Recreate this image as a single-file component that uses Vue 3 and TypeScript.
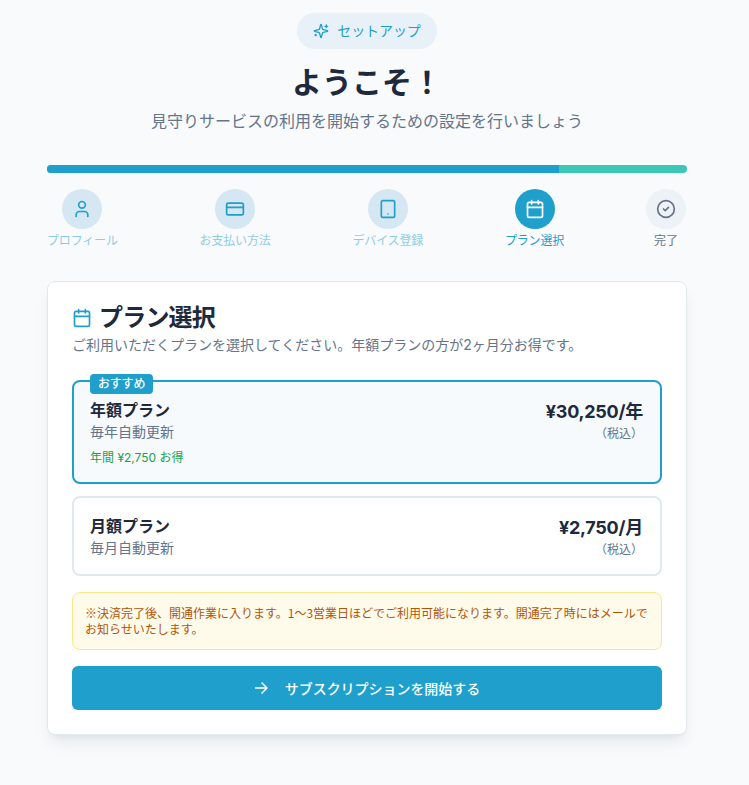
<script setup lang="ts">
interface Step {
  label: string;
  state: 'done' | 'active' | 'todo';
  icon: string;
}

interface Plan {
  name: string;
  renewal: string;
  price: string;
  saving?: string;
  recommended?: boolean;
}

const steps: Step[] = [
  { label: 'プロフィール', state: 'done', icon: 'user' },
  { label: 'お支払い方法', state: 'done', icon: 'card' },
  { label: 'デバイス登録', state: 'done', icon: 'tablet' },
  { label: 'プラン選択', state: 'active', icon: 'calendar' },
  { label: '完了', state: 'todo', icon: 'check' },
];

const plans: Plan[] = [
  { name: '年額プラン', renewal: '毎年自動更新', price: '¥30,250/年', saving: '年間 ¥2,750 お得', recommended: true },
  { name: '月額プラン', renewal: '毎月自動更新', price: '¥2,750/月' },
];
</script>

<template>
  <div class="page">
    <div class="container">
      <header class="header">
        <div class="pill">
          <svg class="pill-icon" viewBox="0 0 24 24">
            <path d="M9.937 15.5A2 2 0 0 0 8.5 14.063l-6.135-1.582a.5.5 0 0 1 0-.962L8.5 9.936A2 2 0 0 0 9.937 8.5l1.582-6.135a.5.5 0 0 1 .963 0L14.063 8.5A2 2 0 0 0 15.5 9.937l6.135 1.581a.5.5 0 0 1 0 .964L15.5 14.063a2 2 0 0 0-1.437 1.437l-1.582 6.135a.5.5 0 0 1-.963 0z" />
            <path d="M20 3v4M22 5h-4M4 17v2M5 18H3" />
          </svg>
          <span class="pill-text">セットアップ</span>
        </div>
        <h1 class="title">ようこそ！</h1>
        <p class="subtitle">見守りサービスの利用を開始するための設定を行いましょう</p>
      </header>

      <div class="progress">
        <div class="progress-fill"></div>
      </div>

      <ol class="steps">
        <li v-for="step in steps" :key="step.label" class="step" :class="step.state">
          <span class="step-circle">
            <svg class="step-icon" viewBox="0 0 24 24">
              <template v-if="step.icon === 'user'">
                <path d="M19 21v-2a4 4 0 0 0-4-4H9a4 4 0 0 0-4 4v2" />
                <circle cx="12" cy="7" r="4" />
              </template>
              <template v-else-if="step.icon === 'card'">
                <rect x="2" y="5" width="20" height="14" rx="2" />
                <path d="M2 10h20" />
              </template>
              <template v-else-if="step.icon === 'tablet'">
                <rect x="4" y="2" width="16" height="20" rx="2" />
                <path d="M12 18h.01" />
              </template>
              <template v-else-if="step.icon === 'calendar'">
                <path d="M8 2v4M16 2v4M3 10h18" />
                <rect x="3" y="4" width="18" height="18" rx="2" />
              </template>
              <template v-else>
                <circle cx="12" cy="12" r="10" />
                <path d="m9 12 2 2 4-4" />
              </template>
            </svg>
          </span>
          <span class="step-label">{{ step.label }}</span>
        </li>
      </ol>

      <section class="card">
        <div class="card-head">
          <svg class="card-icon" viewBox="0 0 24 24">
            <path d="M8 2v4M16 2v4M3 10h18" />
            <rect x="3" y="4" width="18" height="18" rx="2" />
          </svg>
          <h2 class="card-title">プラン選択</h2>
        </div>
        <p class="card-desc">ご利用いただくプランを選択してください。年額プランの方が2ヶ月分お得です。</p>

        <div class="plans">
          <div v-for="plan in plans" :key="plan.name" class="plan" :class="{ selected: plan.recommended }">
            <span v-if="plan.recommended" class="badge">おすすめ</span>
            <div class="plan-info">
              <div class="plan-name">{{ plan.name }}</div>
              <div class="plan-renewal">{{ plan.renewal }}</div>
              <div v-if="plan.saving" class="plan-saving">{{ plan.saving }}</div>
            </div>
            <div class="plan-price">
              <div class="price">{{ plan.price }}</div>
              <div class="tax">（税込）</div>
            </div>
          </div>
        </div>

        <div class="notice">
          ※決済完了後、開通作業に入ります。1〜3営業日ほどでご利用可能になります。開通完了時にはメールでお知らせいたします。
        </div>

        <button type="button" class="submit">
          <svg class="submit-icon" viewBox="0 0 16 16">
            <path d="M1.5 8H13M8 3l5 5-5 5" />
          </svg>
          <span>サブスクリプションを開始する</span>
        </button>
      </section>
    </div>
  </div>
</template>

<style scoped>
.page {
  width: 734px;
  min-height: 785px;
  box-sizing: border-box;
  padding: 13px 0 50px;
  color: #1e293b;
  font-family: Inter, 'Noto Sans CJK JP', sans-serif;
}

.container {
  width: 640px;
  margin: 0 auto;
}

svg {
  fill: none;
  stroke: currentColor;
  stroke-width: 2;
  stroke-linecap: round;
  stroke-linejoin: round;
}

.header {
  display: flex;
  flex-direction: column;
  align-items: center;
}

.pill {
  display: flex;
  align-items: center;
  gap: 8px;
  height: 36px;
  padding: 0 16px;
  border-radius: 18px;
  background: #e8f1f7;
  color: #1f9fcb;
  font-size: 14px;
}

.pill-icon {
  width: 16px;
  height: 16px;
}

.pill-text {
  margin-bottom: 2px;
  letter-spacing: -0.1px;
}

.title {
  margin: 12px 0 0;
  font-size: 30px;
  line-height: 42px;
  font-weight: 700;
}

.subtitle {
  margin: 6px 0 0;
  font-size: 16px;
  line-height: 24px;
  color: #64748b;
}

.progress {
  height: 8px;
  margin-top: 32px;
  border-radius: 4px;
  overflow: hidden;
  background: #3cc7b8;
}

.progress-fill {
  width: 80%;
  height: 100%;
  background: #1f9fcb;
}

.steps {
  display: flex;
  justify-content: space-between;
  margin: 16px 0 0;
  padding: 0;
  list-style: none;
}

.step {
  display: flex;
  flex-direction: column;
  align-items: center;
  gap: 3px;
  min-width: 40px;
  font-size: 12px;
  line-height: 18px;
}

.step:last-child {
  margin-right: 1px;
}

.step-circle {
  display: flex;
  align-items: center;
  justify-content: center;
  width: 40px;
  height: 40px;
  border-radius: 50%;
}

.step-icon {
  width: 20px;
  height: 20px;
}

.step-label {
  letter-spacing: -0.17px;
}

.done .step-circle {
  background: #d5e7f2;
  color: #1f9fcb;
}

.done .step-label {
  color: #1f9fcb;
  opacity: 0.5;
}

.active .step-circle {
  background: #1f9fcb;
  color: #fff;
}

.active .step-label {
  color: #1f9fcb;
}

.todo .step-circle {
  background: #eef1f6;
  color: #64748b;
}

.todo .step-label {
  color: #64748b;
}

.card {
  margin-top: 31px;
  padding: 24px;
  background: #fff;
  border: 1px solid #e2e8f0;
  border-radius: 8px;
  box-shadow: 0 10px 15px -3px rgba(15, 23, 42, 0.08), 0 4px 6px -4px rgba(15, 23, 42, 0.06);
}

.card-head {
  display: flex;
  align-items: center;
  gap: 7px;
}

.card-icon {
  width: 20px;
  height: 20px;
  color: #1f9fcb;
}

.card-title {
  margin: 0;
  font-size: 24px;
  line-height: 24px;
  font-weight: 700;
  letter-spacing: -0.8px;
}

.card-desc {
  margin: 5px 0 0;
  font-size: 14px;
  line-height: 20px;
  color: #64748b;
}

.plans {
  display: flex;
  flex-direction: column;
  gap: 12px;
  margin-top: 25px;
}

.plan {
  position: relative;
  display: flex;
  justify-content: space-between;
  padding: 16px;
  background: #fff;
  border: 2px solid #e2e8f0;
  border-radius: 8px;
}

.plan.selected {
  background: #f6fafd;
  border-color: #1f9fcb;
}

.badge {
  position: absolute;
  top: -8px;
  left: 16px;
  padding: 0 8px;
  border-radius: 4px;
  background: #1f9fcb;
  color: #fff;
  font-size: 12px;
  line-height: 20px;
  font-weight: 500;
  letter-spacing: -0.2px;
}

.plan-name {
  font-size: 16px;
  line-height: 24px;
  font-weight: 700;
}

.plan-renewal {
  font-size: 14px;
  line-height: 20px;
  color: #64748b;
}

.plan-saving {
  margin-top: 8px;
  font-size: 12px;
  line-height: 16px;
  color: #16a34a;
}

.plan-price {
  margin-right: 1px;
  text-align: right;
}

.price {
  font-size: 18px;
  line-height: 28px;
  font-weight: 700;
  letter-spacing: -0.25px;
}

.tax {
  font-size: 12px;
  line-height: 16px;
  color: #64748b;
}

.notice {
  margin-top: 16px;
  padding: 12px;
  background: #fffbeb;
  border: 1px solid #fde68a;
  border-radius: 8px;
  color: #b45309;
  font-family: 'Noto Sans CJK JP', sans-serif;
  font-size: 12px;
  line-height: 16px;
}

.submit {
  display: flex;
  align-items: center;
  justify-content: center;
  gap: 15px;
  width: 100%;
  height: 44px;
  margin-top: 16px;
  border: none;
  border-radius: 6px;
  background: #1f9fcb;
  color: #fff;
  font-family: inherit;
  font-size: 14px;
  font-weight: 500;
  letter-spacing: -0.04px;
  cursor: pointer;
}

.submit-icon {
  width: 16px;
  height: 16px;
  stroke-width: 1.5;
}
</style>

<style>
body {
  background: #f8fafc;
}
</style>
